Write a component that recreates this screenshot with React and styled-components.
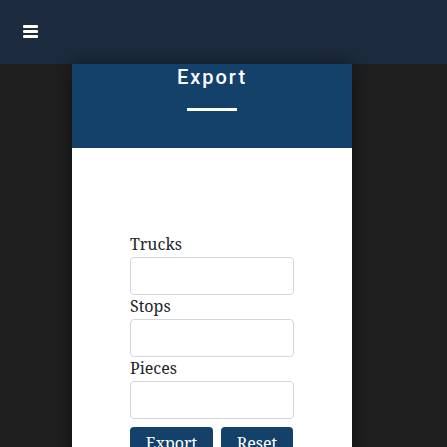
import React from 'react';
import styled, { createGlobalStyle } from 'styled-components';

const serif = '"Noto Serif", "DejaVu Serif", serif';

const GlobalStyle = createGlobalStyle`
  html, body {
    margin: 0;
    padding: 0;
    background: #1f1f1f;
    font-family: ${serif};
    overflow: hidden;
  }
`;

const TopBar = styled.header`
  height: 64px;
  background: #1c2b3e;
  display: flex;
  align-items: center;
  padding-left: 23px;
  box-sizing: border-box;
`;

const MenuButton = styled.button`
  border: none;
  background: none;
  padding: 0;
  width: 15px;
  height: 13px;
  display: flex;
  flex-direction: column;
  justify-content: space-between;
  margin-top: -2px;
  cursor: pointer;
`;

const MenuBar = styled.span`
  display: block;
  height: 3px;
  width: 15px;
  border-radius: 1px;
  background: #ffffff;
`;

const Page = styled.main`
  display: flex;
  justify-content: center;
  padding-right: 23px;
`;

const Card = styled.section`
  width: 280px;
  background: #ffffff;
  box-shadow: 0 0 18px rgba(0, 0, 0, 0.45);
`;

const CardHeader = styled.div`
  height: 84px;
  background: #13416a;
  display: flex;
  flex-direction: column;
  align-items: center;
  box-sizing: border-box;
`;

const Title = styled.h1`
  margin: 0;
  font-family: Roboto, "Liberation Sans", sans-serif;
  font-weight: 500;
  font-size: 20px;
  letter-spacing: 2px;
  line-height: 26px;
  color: #ffffff;
`;

const TitleRule = styled.div`
  width: 50px;
  height: 3px;
  background: #ffffff;
  margin-top: 18px;
`;

const Form = styled.form`
  padding: 85px 58px 0;
  display: flex;
  flex-direction: column;
`;

const Label = styled.label`
  font-size: 16px;
  line-height: 22px;
  color: #212529;
  height: 24px;
  display: block;
`;

const Input = styled.input`
  box-sizing: border-box;
  width: 164px;
  height: 38px;
  border: 1px solid #d4d6dc;
  border-radius: 4px;
  background: #ffffff;
`;

const ButtonRow = styled.div`
  display: flex;
  gap: 8px;
  margin-top: 8px;
`;

const Button = styled.button`
  height: 38px;
  width: ${(p) => p.$width}px;
  border: none;
  border-radius: 4px;
  background: #13416a;
  color: #ffffff;
  font-family: ${serif};
  font-size: 16px;
  line-height: 22px;
  padding: 0 0 6px;
`;

const fields = ['Trucks', 'Stops', 'Pieces'];

export default function App() {
  return (
    <>
      <GlobalStyle />
      <TopBar>
        <MenuButton type="button" aria-label="menu">
          <MenuBar />
          <MenuBar />
          <MenuBar />
        </MenuButton>
      </TopBar>
      <Page>
        <Card>
          <CardHeader>
            <Title>Export</Title>
            <TitleRule />
          </CardHeader>
          <Form>
            {fields.map((f) => (
              <React.Fragment key={f}>
                <Label htmlFor={f}>{f}</Label>
                <Input id={f} />
              </React.Fragment>
            ))}
            <ButtonRow>
              <Button type="button" $width={83}>Export</Button>
              <Button type="button" $width={72}>Reset</Button>
            </ButtonRow>
          </Form>
        </Card>
      </Page>
    </>
  );
}
